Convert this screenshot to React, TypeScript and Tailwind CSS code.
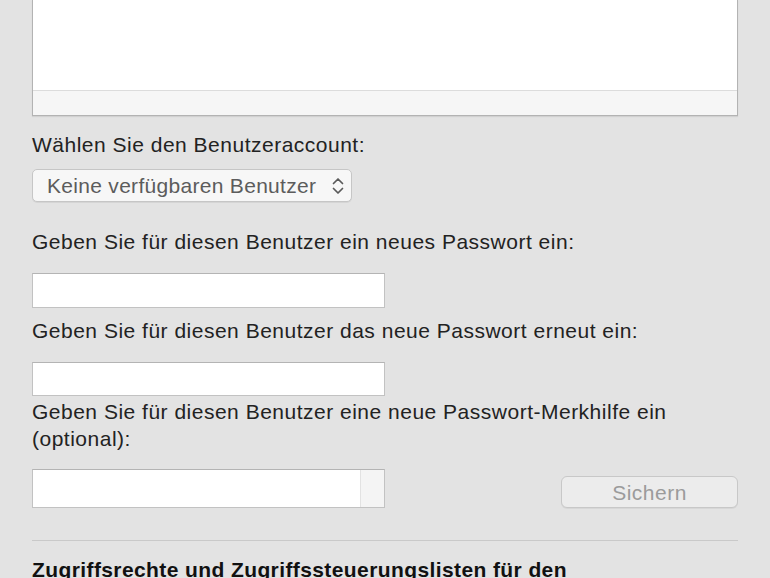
export default function App() {
  return (
    <div
      className="h-[578px] w-[770px] overflow-hidden bg-[#e3e3e3] pl-[32px] text-[21px] tracking-[0.5px] text-[#222]"
      style={{ fontFamily: '"Liberation Sans", Arial, sans-serif' }}
    >
      <div className="w-[706px]">
        {/* list box, cut off at the top */}
        <div className="flex h-[116px] flex-col border-x border-b border-[#b3b3b3] bg-white shadow-[0_1px_1px_rgba(0,0,0,0.08)]">
          <div className="flex-1" />
          <div className="h-[25px] border-t border-[#dcdcdc] bg-[#f6f6f6]" />
        </div>

        <p className="mt-[17px] leading-[24px]">Wählen Sie den Benutzeraccount:</p>

        <div className="mt-[12px] flex h-[33px] w-[320px] items-center justify-between rounded-[5px] border border-[#c6c6c6] bg-[#f7f7f7] pl-[14px] pr-[6px] text-[#5c5c5c] shadow-[0_1px_0_rgba(0,0,0,0.06)]">
          <span className="leading-[24px] tracking-[0.3px]">Keine verfügbaren Benutzer</span>
          <svg width="14" height="20" viewBox="0 0 14 20" fill="none" stroke="#5a5a5a" strokeWidth="1.7" strokeLinecap="round" strokeLinejoin="round">
            <path d="M2.5 7.5 L7 3 L11.5 7.5" />
            <path d="M2.5 12.5 L7 17 L11.5 12.5" />
          </svg>
        </div>

        <p className="mt-[28px] leading-[24px]">Geben Sie für diesen Benutzer ein neues Passwort ein:</p>
        <div className="mt-[19px] h-[35px] w-[353px] border border-[#c2c2c2] border-t-[#b4b4b4] bg-white" />

        <p className="mt-[11px] leading-[24px]">Geben Sie für diesen Benutzer das neue Passwort erneut ein:</p>
        <div className="mt-[19px] h-[34px] w-[353px] border border-[#c2c2c2] border-t-[#b4b4b4] bg-white" />

        <p className="mt-[2px] leading-[27px]">
          Geben Sie für diesen Benutzer eine neue Passwort-Merkhilfe ein
          <br />
          (optional):
        </p>

        <div className="mt-[17px] flex items-end justify-between">
          <div className="flex h-[39px] w-[353px] border border-[#c2c2c2] border-t-[#b4b4b4] bg-white">
            <div className="flex-1" />
            <div className="w-[24px] border-l border-[#e2e2e2] bg-[#f4f4f4]" />
          </div>
          <button
            type="button"
            className="h-[32px] w-[177px] rounded-[6px] border border-[#c8c8c8] bg-[#ececec] text-[21px] tracking-[0.5px] text-[#9b9b9b] shadow-[0_1px_0_rgba(0,0,0,0.05)]"
          >
            Sichern
          </button>
        </div>

        <div className="mt-[32px] h-px bg-[#c9c9c9]" />

        <p className="mt-[17px] font-bold leading-[24px] tracking-[0.4px] text-[#111]">
          Zugriffsrechte und Zugriffssteuerungslisten für den
        </p>
      </div>
    </div>
  );
}
